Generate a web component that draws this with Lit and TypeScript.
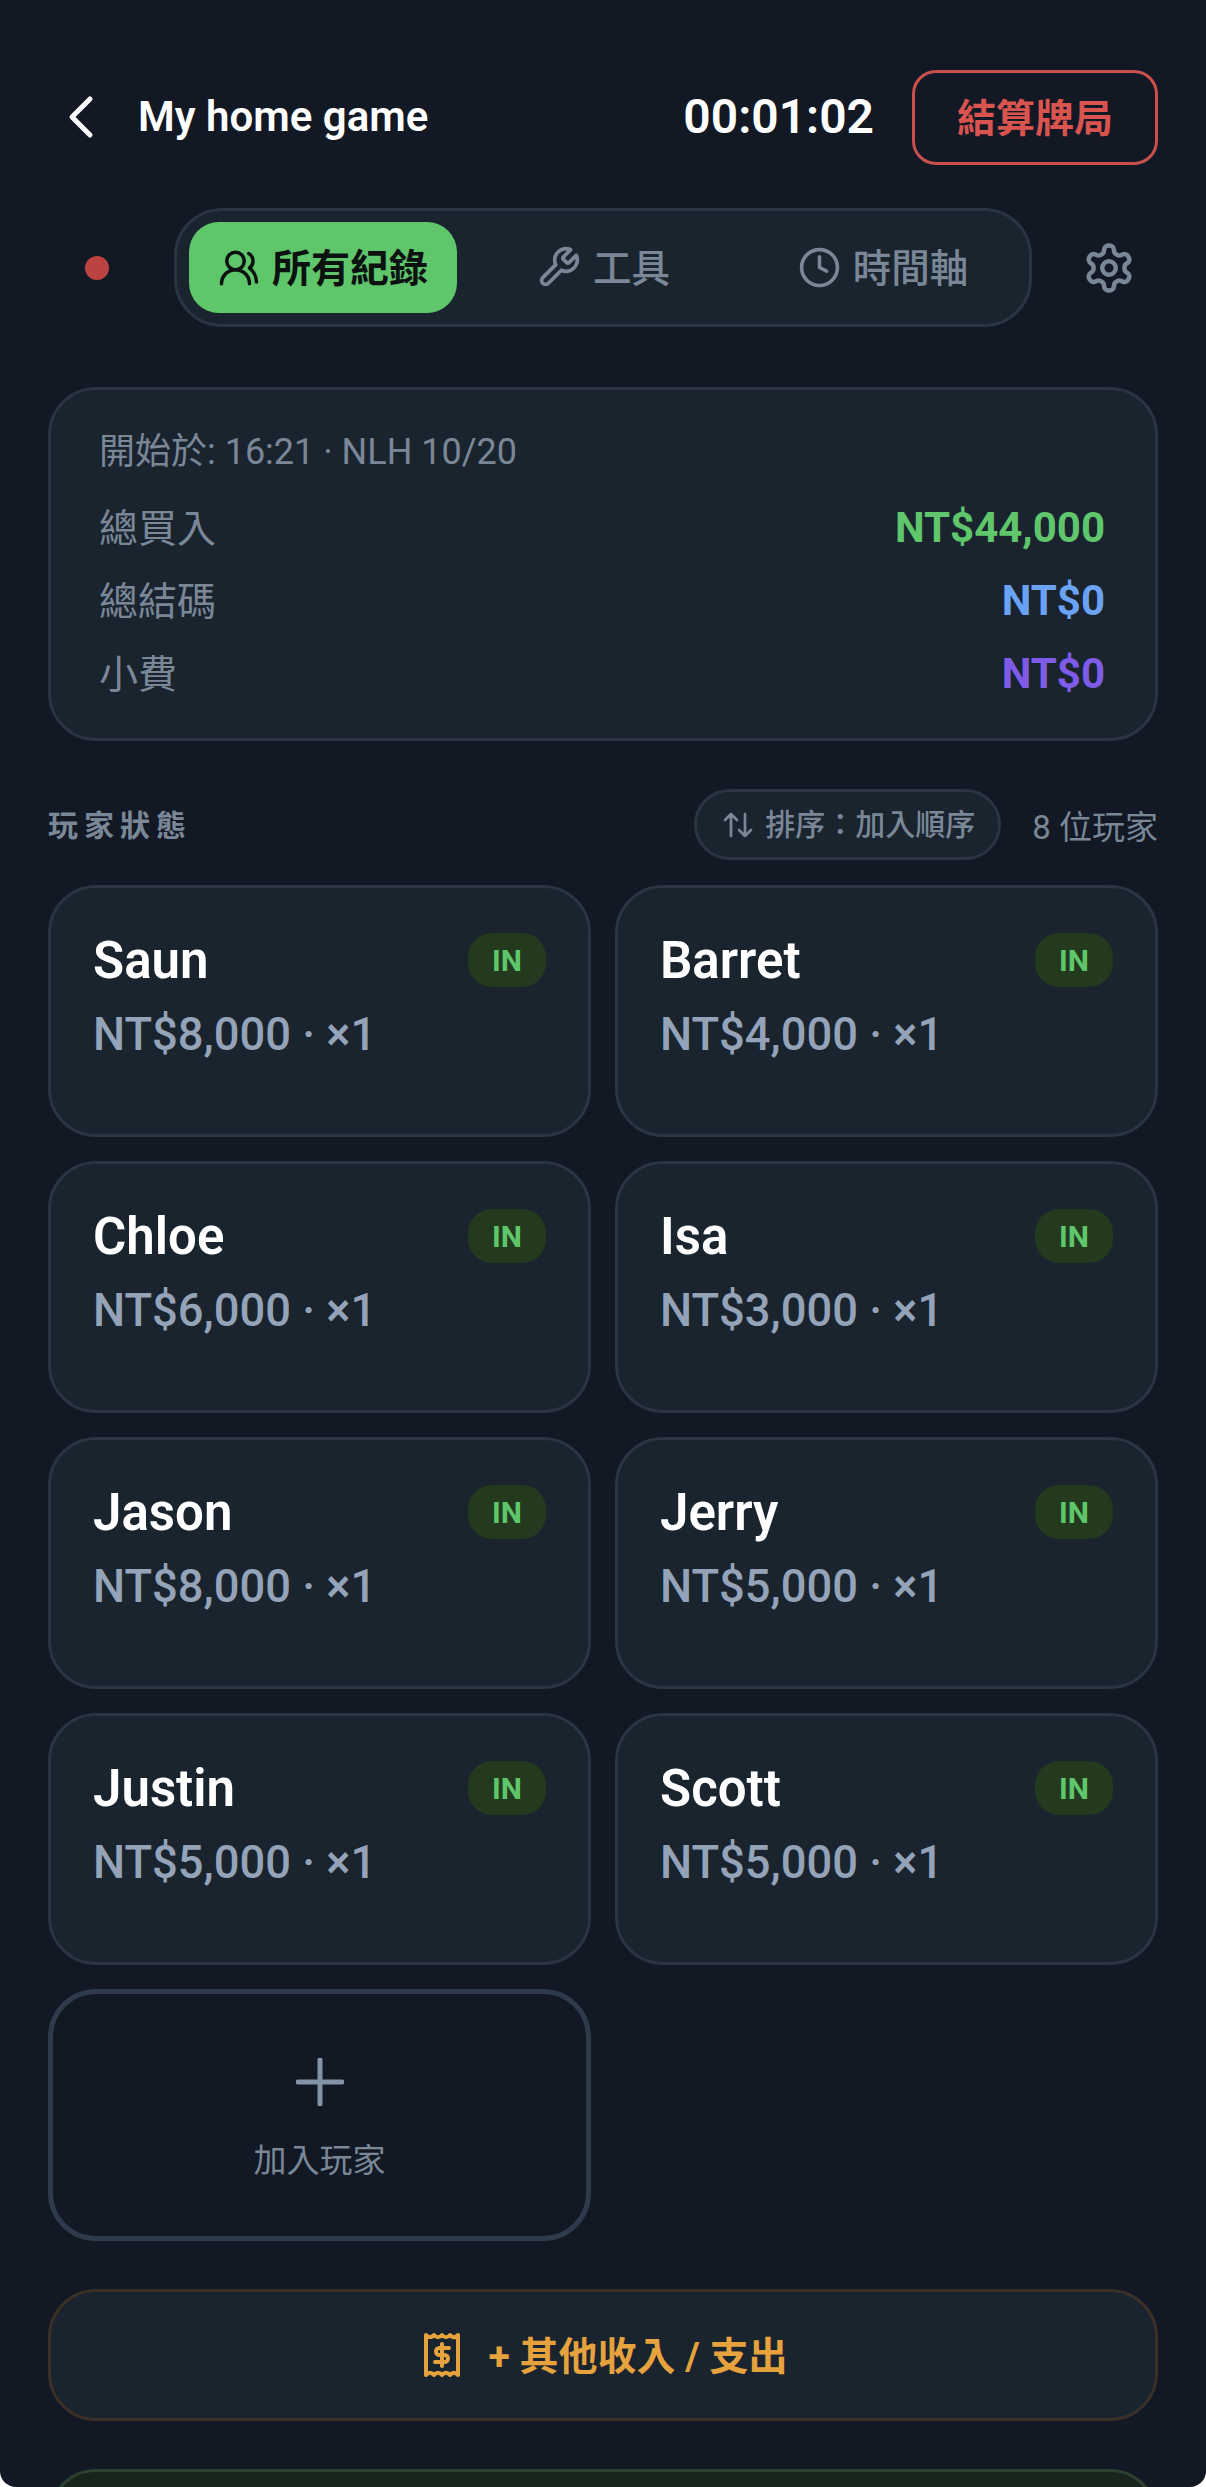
import { LitElement, html, css, svg } from 'lit';
import { customElement } from 'lit/decorators.js';

const players = [
  { name: 'Saun', amount: 'NT$8,000' },
  { name: 'Barret', amount: 'NT$4,000' },
  { name: 'Chloe', amount: 'NT$6,000' },
  { name: 'Isa', amount: 'NT$3,000' },
  { name: 'Jason', amount: 'NT$8,000' },
  { name: 'Jerry', amount: 'NT$5,000' },
  { name: 'Justin', amount: 'NT$5,000' },
  { name: 'Scott', amount: 'NT$5,000' },
];

const totals = [
  { label: '總買入', value: 'NT$44,000', tone: 'green' },
  { label: '總結碼', value: 'NT$0', tone: 'blue' },
  { label: '小費', value: 'NT$0', tone: 'purple' },
];

// full-width colon, the label needs the wide form
const sortLabel = '排序\uFF1A加入順序';

const icon = (size: number, body: unknown) => html`<svg
  class="icon"
  width=${size}
  height=${size}
  viewBox="0 0 24 24"
  fill="none"
  stroke="currentColor"
  stroke-width="2"
  stroke-linecap="round"
  stroke-linejoin="round"
>
  ${body}
</svg>`;

const usersIcon = svg`<path d="M18 21a8 8 0 0 0-16 0" /><circle cx="10" cy="8" r="5" /><path d="M22 20c0-3.37-2-6.5-4-8a5 5 0 0 0-.45-8.3" />`;
const wrenchIcon = svg`<path d="M14.7 6.3a1 1 0 0 0 0 1.4l1.6 1.6a1 1 0 0 0 1.4 0l3.77-3.77a6 6 0 0 1-7.94 7.94l-6.91 6.91a2.12 2.12 0 0 1-3-3l6.91-6.91a6 6 0 0 1 7.94-7.94l-3.76 3.76z" />`;
const clockIcon = svg`<circle cx="12" cy="12" r="10" /><polyline points="12 6 12 12 16 14" />`;
const gearIcon = svg`<path d="M12.22 2h-.44a2 2 0 0 0-2 2v.18a2 2 0 0 1-1 1.73l-.43.25a2 2 0 0 1-2 0l-.15-.08a2 2 0 0 0-2.73.73l-.22.38a2 2 0 0 0 .73 2.73l.15.1a2 2 0 0 1 1 1.72v.51a2 2 0 0 1-1 1.74l-.15.09a2 2 0 0 0-.73 2.73l.22.38a2 2 0 0 0 2.73.73l.15-.08a2 2 0 0 1 2 0l.43.25a2 2 0 0 1 1 1.73V20a2 2 0 0 0 2 2h.44a2 2 0 0 0 2-2v-.18a2 2 0 0 1 1-1.73l.43-.25a2 2 0 0 1 2 0l.15.08a2 2 0 0 0 2.73-.73l.22-.39a2 2 0 0 0-.73-2.73l-.15-.08a2 2 0 0 1-1-1.74v-.5a2 2 0 0 1 1-1.74l.15-.09a2 2 0 0 0 .73-2.73l-.22-.38a2 2 0 0 0-2.73-.73l-.15.08a2 2 0 0 1-2 0l-.43-.25a2 2 0 0 1-1-1.73V4a2 2 0 0 0-2-2z" /><circle cx="12" cy="12" r="3" />`;

@customElement('app-root')
export class AppRoot extends LitElement {
  static styles = css`
    :host {
      display: block;
      font-family: Roboto, 'Noto Sans CJK TC', sans-serif;
    }

    * {
      box-sizing: border-box;
    }

    .page {
      width: 1206px;
      height: 2487px;
      overflow: hidden;
      background: #121924;
      border-radius: 0 0 16px 16px;
      padding: 70px 48px 0;
      display: flex;
      flex-direction: column;
    }

    .icon {
      display: block;
      flex: none;
    }

    /* the CJK glyphs sit a little low in a Roboto line box */
    .cjk {
      padding-bottom: 5px;
    }

    .header {
      display: flex;
      align-items: center;
      height: 95px;
      flex: none;
    }

    .back {
      width: 90px;
      padding-left: 18px;
      padding-bottom: 2px;
      color: #fff;
      flex: none;
    }

    .title {
      flex: 1;
      color: #fff;
      font-size: 42px;
      font-weight: 600;
      padding-bottom: 3px;
    }

    .timer {
      color: #fff;
      font-size: 48px;
      font-weight: 600;
      margin-right: 38px;
      padding-bottom: 3px;
    }

    .settle {
      width: 246px;
      height: 95px;
      border: 3px solid #c9504e;
      border-radius: 24px;
      display: flex;
      align-items: center;
      justify-content: center;
      color: #d9534f;
      font-size: 39px;
      font-weight: 600;
    }

    .tabs-row {
      display: flex;
      align-items: center;
      gap: 28px;
      margin-top: 43px;
      flex: none;
    }

    .slot {
      width: 98px;
      display: flex;
      justify-content: center;
      flex: none;
      color: #7a8797;
    }

    .dot {
      width: 24px;
      height: 24px;
      border-radius: 50%;
      background: #bb4341;
    }

    .tabs {
      flex: 1;
      height: 119px;
      display: flex;
      gap: 12px;
      padding: 11px 12px;
      background: #1a242f;
      border: 3px solid #2a3442;
      border-radius: 48px;
    }

    .tab {
      flex: 1;
      display: flex;
      align-items: center;
      justify-content: center;
      gap: 12px;
      border-radius: 30px;
      color: #7a8797;
      font-size: 38.5px;
      font-weight: 500;
    }

    .tab.active {
      background: #5fc66b;
      color: #0b1210;
      font-size: 39px;
      font-weight: 700;
    }

    .summary {
      margin-top: 60px;
      padding: 35px 48px;
      height: 354px;
      flex: none;
      background: #1a242f;
      border: 3px solid #2a3442;
      border-radius: 48px;
    }

    .meta {
      color: #7a8797;
      font-size: 36px;
      line-height: 54px;
    }

    .total {
      display: flex;
      justify-content: space-between;
      align-items: center;
      height: 57px;
      margin-top: 16px;
      color: #7a8797;
      font-size: 39px;
    }

    .meta + .total {
      margin-top: 20px;
    }

    .total b {
      font-weight: 700;
      font-size: 42px;
      margin-right: 2px;
    }

    .green {
      color: #5fc66b;
    }

    .blue {
      color: #6aa2f5;
    }

    .purple {
      color: #7f5ce8;
    }

    .section {
      display: flex;
      align-items: center;
      height: 71px;
      margin-top: 48px;
      flex: none;
    }

    .section-title {
      flex: 1;
      color: #7a8797;
      font-size: 30px;
      font-weight: 700;
      letter-spacing: 6px;
      padding-bottom: 4px;
    }

    .sort {
      display: flex;
      align-items: center;
      gap: 12px;
      height: 71px;
      padding: 0 23px 0 26px;
      background: #1a242f;
      border: 3px solid #2a3442;
      border-radius: 36px;
      color: #7a8797;
      font-size: 30px;
      font-weight: 500;
    }

    .count {
      margin-left: 31px;
      color: #7a8797;
      font-size: 33px;
    }

    .grid {
      display: grid;
      grid-template-columns: 1fr 1fr;
      grid-auto-rows: 252px;
      gap: 24px;
      margin-top: 25px;
      flex: none;
    }

    .player {
      padding: 45px 42px;
      background: #1a242f;
      border: 3px solid #2a3442;
      border-radius: 48px;
    }

    .player-top {
      display: flex;
      align-items: center;
      justify-content: space-between;
      height: 54px;
    }

    .name {
      color: #fff;
      font-size: 51px;
      font-weight: 600;
    }

    .badge {
      width: 78px;
      height: 54px;
      border-radius: 24px;
      background: #233a1e;
      color: #5fc66b;
      font-size: 30px;
      font-weight: 700;
      display: flex;
      align-items: center;
      justify-content: center;
    }

    .amount {
      margin-top: 21px;
      color: #94a3b8;
      font-size: 45.3px;
      font-weight: 500;
      line-height: 54px;
    }

    .add {
      border: 5px solid #2f3b4c;
      border-radius: 48px;
      padding-top: 10px;
      display: flex;
      flex-direction: column;
      align-items: center;
      justify-content: center;
      gap: 28px;
      color: #7a8797;
      font-size: 33px;
    }

    .add .plus {
      color: #8392a6;
    }

    .wide {
      height: 132px;
      margin-top: 48px;
      flex: none;
      border-radius: 48px;
      display: flex;
      align-items: center;
      justify-content: center;
      gap: 28px;
      padding-left: 4px;
      font-size: 39px;
      font-weight: 700;
    }

    .other {
      background: #1a242f;
      border: 3px solid #3a3027;
      color: #e5a23d;
    }

    .next {
      background: #18251d;
      border: 3px solid #2c4231;
    }
  `;

  render() {
    return html`
      <div class="page">
        <div class="header">
          <div class="back">
            <svg class="icon" width="30" height="46" viewBox="0 0 30 46" fill="none" stroke="currentColor" stroke-width="5" stroke-linecap="round" stroke-linejoin="round">
              <path d="M24 5 6 23l18 18" />
            </svg>
          </div>
          <div class="title">My home game</div>
          <div class="timer">00:01:02</div>
          <div class="settle"><span class="cjk">結算牌局</span></div>
        </div>

        <div class="tabs-row">
          <div class="slot"><div class="dot"></div></div>
          <div class="tabs">
            <div class="tab active">${icon(42, usersIcon)}<span class="cjk">所有紀錄</span></div>
            <div class="tab">${icon(45, wrenchIcon)}<span class="cjk">工具</span></div>
            <div class="tab">${icon(43, clockIcon)}<span class="cjk">時間軸</span></div>
          </div>
          <div class="slot">${icon(54, gearIcon)}</div>
        </div>

        <div class="summary">
          <div class="meta">開始於: 16:21 · NLH 10/20</div>
          ${totals.map(
            (t) => html`<div class="total">
              <span class="cjk">${t.label}</span><b class=${t.tone}>${t.value}</b>
            </div>`
          )}
        </div>

        <div class="section">
          <div class="section-title">玩家狀態</div>
          <div class="sort">
            <svg class="icon" width="30" height="28" viewBox="0 0 30 28" fill="none" stroke="currentColor" stroke-width="2.700" stroke-linecap="round" stroke-linejoin="round">
              <path d="M8 25V3M2 9l6-6 6 6M22 3v22M16 19l6 6 6-6" />
            </svg>
            <span class="cjk" lang="zh-TW">${sortLabel}</span>
          </div>
          <div class="count">8 位玩家</div>
        </div>

        <div class="grid">
          ${players.map(
            (p) => html`<div class="player">
              <div class="player-top">
                <span class="name">${p.name}</span>
                <span class="badge">IN</span>
              </div>
              <div class="amount">${p.amount} · ×1</div>
            </div>`
          )}
          <div class="add">
            <svg class="icon plus" width="48" height="48" viewBox="0 0 48 48" fill="none" stroke="currentColor" stroke-width="5" stroke-linecap="round">
              <path d="M24 2v44M2 24h44" />
            </svg>
            加入玩家
          </div>
        </div>

        <div class="wide other">
          <svg class="icon" width="38" height="46" viewBox="0 0 38 46" fill="none" stroke="currentColor" stroke-width="4" stroke-linecap="round" stroke-linejoin="round">
            <path d="M3 3c3 3 5 3 8 0 2.500 3 5.500 3 8 0 2.500 3 5.500 3 8 0 3 3 5 3 8 0v40c-3-3-5-3-8 0-2.500-3-5.500-3-8 0-2.500-3-5.500-3-8 0-3-3-5-3-8 0z" />
            <path d="M26 16h-9.500a3.500 3.500 0 0 0 0 7h5a3.500 3.500 0 0 1 0 7H12M19 12v22" />
          </svg>
          <span class="cjk">+ 其他收入 / 支出</span>
        </div>
        <div class="wide next"></div>
      </div>
    `;
  }
}
